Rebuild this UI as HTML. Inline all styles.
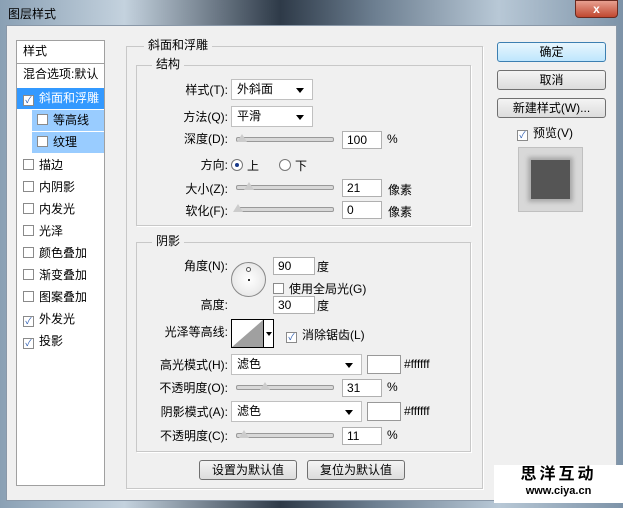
<!DOCTYPE html>
<html><head><meta charset="utf-8"><style>
*{margin:0;padding:0;box-sizing:border-box}
body{width:623px;height:508px;overflow:hidden;position:relative;font-family:"Liberation Sans","Noto Sans CJK SC",sans-serif;font-size:12px;color:#000;background:#3a4a5a}
.a{position:absolute}
.tb{left:0;top:0;width:623px;height:508px;background:linear-gradient(90deg,#8aa0b4 0%,#c4d2de 20%,#2e3a48 45%,#6c7e90 60%,#b8c8d6 80%,#7d93a8 100%)}
.body{left:6px;top:25px;width:611px;height:476px;background:#f0f0f0;border:1px solid #8a98a8}
.list{left:16px;top:40px;width:89px;height:446px;background:#fff;border:1px solid #a0a0a0}
.it{position:absolute;left:0;width:87px;height:21px;line-height:21px;padding-left:6px;font-size:12px}
.cb{display:inline-block;width:11px;height:11px;border:1px solid #8a8a8a;background:#fff;vertical-align:-1px;margin-right:5px;font-size:9px;line-height:9px;text-align:center;color:#2a5ab0}
.grp{border:1px solid #c8c8c8;box-shadow:1px 1px 0 #fff}
.gt{position:absolute;background:#f0f0f0;padding:0 4px;font-size:12px;line-height:14px}
.lbl{position:absolute;text-align:right;font-size:12px;line-height:18px}
.sel{position:absolute;height:21px;background:#fff;border:1px solid #c0c0c0;line-height:19px;padding-left:5px}
.sel:after{content:"";position:absolute;right:8px;top:8px;border:4px solid transparent;border-top:5px solid #000;border-bottom:0}
.inp{position:absolute;height:18px;background:#fff;border:1px solid #b0b0b0;line-height:16px;padding-left:4px}
.sl{position:absolute;height:5px;background:#d8d8d8;border:1px solid #999;border-radius:2px}
.th{position:absolute;width:0;height:0;border-left:5px solid transparent;border-right:5px solid transparent;border-bottom:8px solid #e8e8e8}
.btn{position:absolute;height:20px;border:1px solid #707070;border-radius:3px;background:linear-gradient(#f4f4f4,#dcdcdc);text-align:center;line-height:18px}
</style></head><body>
<div class="a tb"></div>
<div class="a" style="left:8px;top:5px;color:#000;font-size:12px">图层样式</div>
<div class="a" style="left:575px;top:0;width:43px;height:18px;border:1px solid #6a2a20;border-radius:0 0 4px 4px;background:linear-gradient(#e8a090,#c04830);color:#fff;text-align:center;font-weight:bold;line-height:16px">x</div>
<div class="a body"></div>
<div class="a list">
<div class="it" style="top:0">样式</div>
<div class="a" style="top:22px;left:0;width:87px;border-top:1px solid #a0a0a0"></div>
<div class="it" style="top:23px">混合选项:默认</div>
<div class="it" style="top:47px;background:#3399ff;color:#fff"><span class="cb">✓</span>斜面和浮雕</div>
<div class="it" style="top:69px;left:15px;width:72px;background:#99ccff;padding-left:5px"><span class="cb"></span>等高线</div>
<div class="it" style="top:91px;left:15px;width:72px;background:#99ccff;padding-left:5px"><span class="cb"></span>纹理</div>
<div class="it" style="top:114px"><span class="cb"></span>描边</div>
<div class="it" style="top:136px"><span class="cb"></span>内阴影</div>
<div class="it" style="top:158px"><span class="cb"></span>内发光</div>
<div class="it" style="top:180px"><span class="cb"></span>光泽</div>
<div class="it" style="top:202px"><span class="cb"></span>颜色叠加</div>
<div class="it" style="top:224px"><span class="cb"></span>渐变叠加</div>
<div class="it" style="top:246px"><span class="cb"></span>图案叠加</div>
<div class="it" style="top:268px"><span class="cb">✓</span>外发光</div>
<div class="it" style="top:290px"><span class="cb">✓</span>投影</div>
</div>

<div class="a grp" style="left:126px;top:46px;width:357px;height:443px"></div>
<div class="gt" style="left:144px;top:38px">斜面和浮雕</div>
<div class="a grp" style="left:136px;top:65px;width:335px;height:161px"></div>
<div class="gt" style="left:152px;top:57px">结构</div>

<div class="lbl" style="left:150px;top:81px;width:78px">样式(T):</div>
<div class="sel" style="left:231px;top:79px;width:82px">外斜面</div>
<div class="lbl" style="left:150px;top:108px;width:78px">方法(Q):</div>
<div class="sel" style="left:231px;top:106px;width:82px">平滑</div>
<div class="lbl" style="left:150px;top:130px;width:78px">深度(D):</div>
<div class="sl" style="left:236px;top:137px;width:98px"></div><div class="th" style="left:237px;top:134px;border-bottom-color:#ccc"></div>
<div class="inp" style="left:342px;top:131px;width:40px">100</div><div class="a" style="left:387px;top:132px">%</div>
<div class="lbl" style="left:150px;top:156px;width:78px">方向:</div>
<div class="a" style="left:231px;top:159px;width:12px;height:12px;border:1px solid #777;border-radius:50%;background:#fff"><div class="a" style="left:3px;top:3px;width:4px;height:4px;border-radius:50%;background:#1a3a8a"></div></div>
<div class="a" style="left:247px;top:157px">上</div>
<div class="a" style="left:279px;top:159px;width:12px;height:12px;border:1px solid #777;border-radius:50%;background:#fff"></div>
<div class="a" style="left:295px;top:157px">下</div>
<div class="lbl" style="left:150px;top:180px;width:78px">大小(Z):</div>
<div class="sl" style="left:236px;top:185px;width:98px"></div><div class="th" style="left:244px;top:182px;border-bottom-color:#ccc"></div>
<div class="inp" style="left:342px;top:179px;width:40px">21</div><div class="a" style="left:388px;top:181px">像素</div>
<div class="lbl" style="left:150px;top:202px;width:78px">软化(F):</div>
<div class="sl" style="left:236px;top:207px;width:98px"></div><div class="th" style="left:233px;top:204px;border-bottom-color:#ccc"></div>
<div class="inp" style="left:342px;top:201px;width:40px">0</div><div class="a" style="left:388px;top:203px">像素</div>

<div class="a grp" style="left:136px;top:242px;width:335px;height:210px"></div>
<div class="gt" style="left:152px;top:234px">阴影</div>
<div class="lbl" style="left:150px;top:257px;width:78px">角度(N):</div>
<div class="a" style="left:231px;top:262px;width:35px;height:35px;border:1px solid #888;border-radius:50%;background:radial-gradient(#fff,#e0e0e0)"><div class="a" style="left:14px;top:4px;width:5px;height:5px;border:1px solid #555;border-radius:50%;background:#fff"></div><div class="a" style="left:16px;top:16px;width:2px;height:2px;background:#333"></div></div>
<div class="inp" style="left:273px;top:257px;width:42px">90</div><div class="a" style="left:317px;top:258px">度</div>
<div class="a" style="left:273px;top:280px"><span class="cb"></span>使用全局光(G)</div>
<div class="lbl" style="left:150px;top:296px;width:78px">高度:</div>
<div class="inp" style="left:273px;top:296px;width:42px">30</div><div class="a" style="left:317px;top:297px">度</div>
<div class="lbl" style="left:130px;top:323px;width:98px">光泽等高线:</div>
<div class="a" style="left:231px;top:319px;width:43px;height:29px;border:1px solid #000;background:#fff">
<svg width="33" height="27" style="position:absolute;left:0;top:0"><polygon points="0,27 31,0 31,27" fill="#a0a0a0"/></svg>
<div class="a" style="left:31px;top:0;width:1px;height:27px;background:#000"></div>
<div class="a" style="left:34px;top:12px;border:3px solid transparent;border-top:4px solid #000"></div></div>
<div class="a" style="left:286px;top:326px"><span class="cb">✓</span>消除锯齿(L)</div>
<div class="lbl" style="left:140px;top:356px;width:88px">高光模式(H):</div>
<div class="sel" style="left:231px;top:354px;width:131px">滤色</div>
<div class="a" style="left:367px;top:355px;width:34px;height:19px;background:#fff;border:1px solid #999"></div>
<div class="a" style="left:404px;top:357px">#ffffff</div>
<div class="lbl" style="left:140px;top:379px;width:88px">不透明度(O):</div>
<div class="sl" style="left:236px;top:385px;width:98px"></div><div class="th" style="left:260px;top:382px;border-bottom-color:#ccc"></div>
<div class="inp" style="left:342px;top:379px;width:40px">31</div><div class="a" style="left:387px;top:380px">%</div>
<div class="lbl" style="left:140px;top:403px;width:88px">阴影模式(A):</div>
<div class="sel" style="left:231px;top:401px;width:131px">滤色</div>
<div class="a" style="left:367px;top:402px;width:34px;height:19px;background:#fff;border:1px solid #999"></div>
<div class="a" style="left:404px;top:404px">#ffffff</div>
<div class="lbl" style="left:140px;top:427px;width:88px">不透明度(C):</div>
<div class="sl" style="left:236px;top:433px;width:98px"></div><div class="th" style="left:239px;top:430px;border-bottom-color:#ccc"></div>
<div class="inp" style="left:342px;top:427px;width:40px">11</div><div class="a" style="left:387px;top:428px">%</div>
<div class="btn" style="left:199px;top:460px;width:98px">设置为默认值</div>
<div class="btn" style="left:307px;top:460px;width:98px">复位为默认值</div>

<div class="btn" style="left:497px;top:42px;width:109px;border-color:#3c7fb1;background:linear-gradient(#e8f6fd,#bee6fd)">确定</div>
<div class="btn" style="left:497px;top:70px;width:109px">取消</div>
<div class="btn" style="left:497px;top:98px;width:109px">新建样式(W)...</div>
<div class="a" style="left:517px;top:124px"><span class="cb">✓</span>预览(V)</div>
<div class="a" style="left:518px;top:147px;width:65px;height:65px;background:#d8d8d8;border:1px solid #c0c0c0"><div class="a" style="left:12px;top:12px;width:39px;height:39px;background:#555;box-shadow:0 0 4px 3px #aaa"></div></div>

<div class="a" style="left:494px;top:465px;width:129px;height:38px;background:#fff;text-align:center">
<div style="font-size:16px;font-weight:bold;line-height:20px;letter-spacing:3px">思洋互动</div>
<div style="font-size:11px;font-weight:bold;line-height:12px">www.ciya.cn</div></div>
</body></html>
